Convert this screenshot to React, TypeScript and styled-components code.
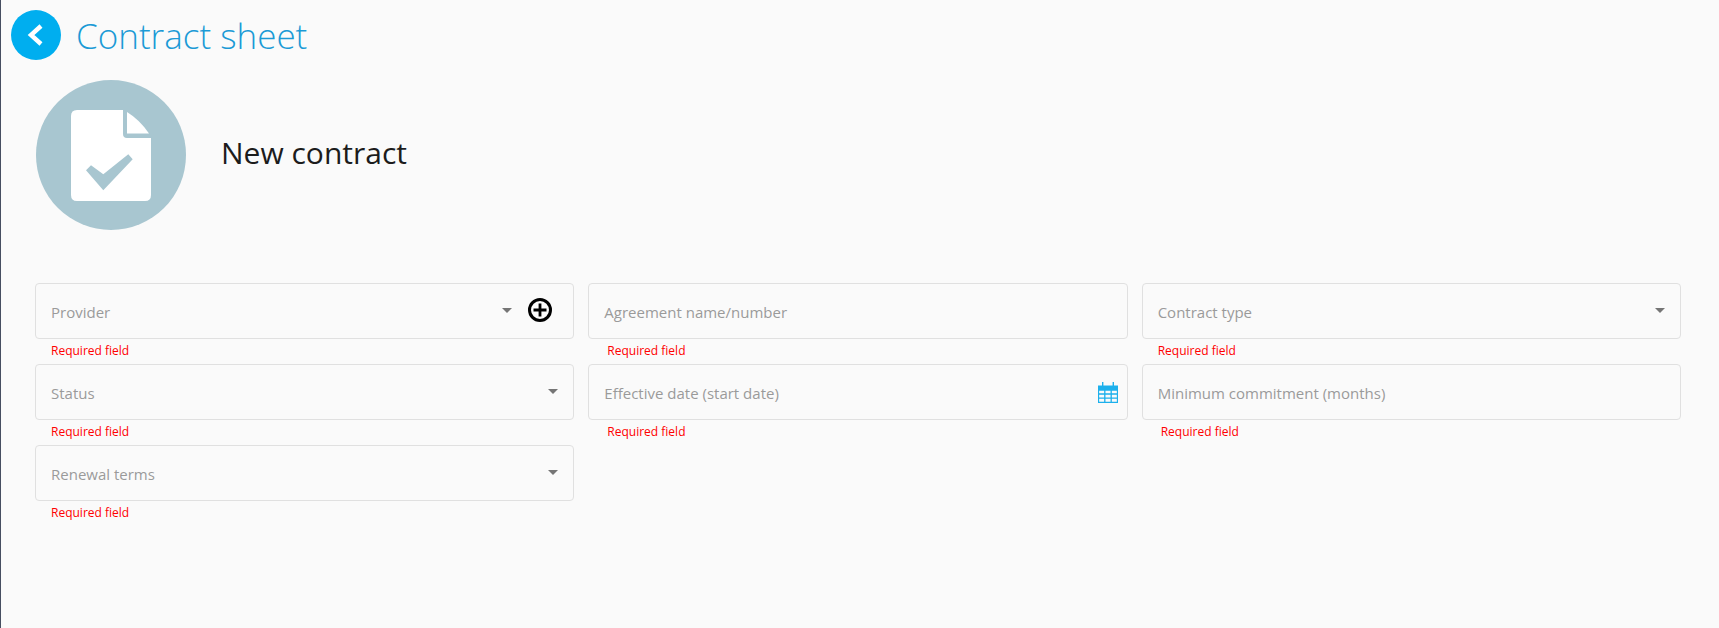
import styled, { createGlobalStyle } from 'styled-components';

const GlobalStyle = createGlobalStyle`
  * {
    box-sizing: border-box;
  }

  html, body {
    margin: 0;
    height: 100%;
    background: #fafafa;
  }

  body {
    font-family: "Open Sans", "Liberation Sans", sans-serif;
  }
`;

function BackIcon() {
  return (
    <svg width="50" height="50" viewBox="0 0 50 50">
      <path d="M30 16 L20 25 L30 34" fill="none" stroke="#fff" strokeWidth="4.4" />
    </svg>
  );
}

function ContractIcon() {
  return (
    <svg width="80" height="91" viewBox="0 0 80 91">
      <path
        d="M6 0 H52 V24 Q52 28 56 28 H80 V85 Q80 91 74 91 H6 Q0 91 0 85 V6 Q0 0 6 0 Z"
        fill="#fff"
      />
      <path d="M56 2 Q69 10 78 23.5 H56 Z" fill="#fff" />
      <path d="M20 55.3 L32.3 64.3 L57.3 44.3 L61.7 49.3 L32.3 80.3 L15 60.3 Z" fill="#a8c6d0" />
    </svg>
  );
}

function PlusCircleIcon() {
  return (
    <svg width="24" height="24" viewBox="0 0 24 24">
      <circle cx="12" cy="12" r="10.5" fill="none" stroke="#000" strokeWidth="3" />
      <path d="M12 5.5 V18.5 M5.5 12 H18.5" stroke="#000" strokeWidth="2.8" />
    </svg>
  );
}

function CalendarIcon() {
  return (
    <svg width="20" height="21" viewBox="0 0 20 21">
      <path d="M0 3.5 H20 V8 H0 Z M4 0 H5.4 V4 H4 Z M14.6 0 H16 V4 H14.6 Z" fill="#1cb0ec" />
      <path
        d="M0.5 8 H19.5 V20.5 H0.5 Z M0.5 12 H19.5 M0.5 16.2 H19.5 M6.8 8 V20.5 M13.2 8 V20.5"
        fill="none"
        stroke="#1cb0ec"
        strokeWidth="1.3"
      />
    </svg>
  );
}

type FieldConfig = {
  label: string;
  select?: boolean;
  add?: boolean;
  calendar?: boolean;
  errorIndent?: number;
};

const fields: FieldConfig[] = [
  { label: 'Provider', select: true, add: true },
  { label: 'Agreement name/number', errorIndent: 19 },
  { label: 'Contract type', select: true },
  { label: 'Status', select: true },
  { label: 'Effective date (start date)', calendar: true, errorIndent: 19 },
  { label: 'Minimum commitment (months)', errorIndent: 19 },
  { label: 'Renewal terms', select: true },
];

function App() {
  return (
    <>
      <GlobalStyle />
      <Page>
        <Header>
          <BackButton>
            <BackIcon />
          </BackButton>
          <Title>Contract sheet</Title>
        </Header>
        <Summary>
          <Avatar>
            <ContractIcon />
          </Avatar>
          <Name>New contract</Name>
        </Summary>
        <Form>
          {fields.map((field) => (
            <Field key={field.label}>
              <Control>
                <Placeholder>{field.label}</Placeholder>
                {field.select && <Caret $withAdd={field.add} />}
                {field.add && (
                  <AddButton>
                    <PlusCircleIcon />
                  </AddButton>
                )}
                {field.calendar && (
                  <CalendarButton>
                    <CalendarIcon />
                  </CalendarButton>
                )}
              </Control>
              <ErrorText $indent={field.errorIndent ?? 16}>Required field</ErrorText>
            </Field>
          ))}
        </Form>
      </Page>
    </>
  );
}

const Page = styled.div`
  min-height: 100vh;
  background: #fafafa;
  border-left: 1px solid #464e60;
  padding: 10px 38px 0 0;
`;

const Header = styled.header`
  display: flex;
  align-items: center;
  gap: 15px;
  padding-left: 10px;
`;

const BackButton = styled.button`
  width: 50px;
  height: 50px;
  padding: 0;
  border: 0;
  border-radius: 50%;
  background: #00aeef;
  display: flex;
  justify-content: center;
  align-items: center;
`;

const Title = styled.h1`
  margin: 2px 0 0;
  font-size: 35px;
  font-weight: 300;
  line-height: 48px;
  color: #1b9ad6;
`;

const Summary = styled.section`
  display: flex;
  align-items: center;
  gap: 35px;
  margin-top: 20px;
  padding-left: 35px;
`;

const Avatar = styled.div`
  width: 150px;
  height: 150px;
  border-radius: 50%;
  background: #a8c6d0;
  display: flex;
  justify-content: center;
  align-items: center;
  flex-shrink: 0;
`;

const Name = styled.h2`
  margin: 0 0 6px;
  font-size: 30px;
  font-weight: 400;
  color: #1c1c1c;
`;

const Form = styled.form`
  display: grid;
  grid-template-columns: repeat(3, 1fr);
  column-gap: 14px;
  margin-top: 53px;
  padding-left: 34px;
`;

const Field = styled.div`
  height: 81px;
`;

const Control = styled.div`
  height: 56px;
  border: 1px solid #e0e0e0;
  border-radius: 4px;
  display: flex;
  align-items: center;
  padding: 0 15px;
`;

const Placeholder = styled.span`
  flex: 1;
  font-size: 15px;
  color: #9a9a9a;
  margin-top: 1px;
`;

const Caret = styled.span<{ $withAdd?: boolean }>`
  width: 0;
  height: 0;
  margin-right: ${(p) => (p.$withAdd ? '16px' : '0')};
  margin-top: -1px;
  border-left: 5px solid transparent;
  border-right: 5px solid transparent;
  border-top: 5px solid #757575;
`;

const AddButton = styled.span`
  display: flex;
  margin-right: 6px;
  margin-top: -3px;
`;

const CalendarButton = styled.span`
  display: flex;
  margin-right: -6px;
  margin-top: 1px;
`;

const ErrorText = styled.div<{ $indent: number }>`
  margin-top: 3px;
  padding-left: ${(p) => p.$indent}px;
  font-size: 12px;
  line-height: 17px;
  color: #ff0000;
`;

export default App;
